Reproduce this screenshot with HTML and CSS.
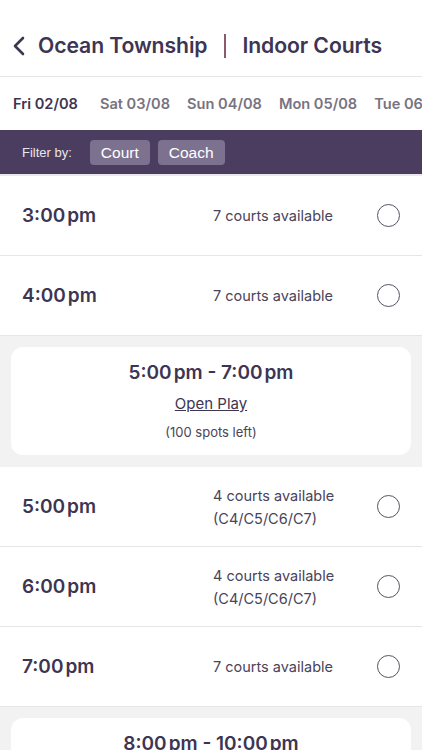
FILE: index.html
```html
<!DOCTYPE html>
<html lang="en">
<head>
    <meta charset="UTF-8">
    <meta name="viewport" content="width=device-width, initial-scale=1.0">
    <title>Indoor Courts</title>
    <link rel="stylesheet" href="styles.css">
</head>
<body>
    <div class="header">
        <svg class="back" width="14" height="22" viewBox="0 0 14 22">
            <path d="M11 3 L3 11 L11 19" fill="none" stroke="#3d3552" stroke-width="2.6" stroke-linecap="round" stroke-linejoin="round"/>
        </svg>
        <span class="title">Ocean Township</span>
        <span class="sep"></span>
        <span class="title">Indoor Courts</span>
    </div>

    <div class="dates">
        <span class="date active">Fri 02/08</span>
        <span class="date">Sat 03/08</span>
        <span class="date">Sun 04/08</span>
        <span class="date">Mon 05/08</span>
        <span class="date">Tue 06/08</span>
    </div>

    <div class="filter">
        <span class="filter-label">Filter by:</span>
        <span class="chip">Court</span>
        <span class="chip">Coach</span>
    </div>

    <div class="slots">
        <div class="slot">
            <div class="time">3:00<span class="ampm">pm</span></div>
            <div class="avail">7 courts available</div>
            <div class="radio"></div>
        </div>
        <div class="slot">
            <div class="time">4:00<span class="ampm">pm</span></div>
            <div class="avail">7 courts available</div>
            <div class="radio"></div>
        </div>
        <div class="event-wrap">
            <div class="event">
                <div class="event-time">5:00<span class="ampm">pm</span> - 7:00<span class="ampm">pm</span></div>
                <a class="event-name" href="#">Open Play</a>
                <div class="event-spots">(100 spots left)</div>
            </div>
        </div>
        <div class="slot">
            <div class="time">5:00<span class="ampm">pm</span></div>
            <div class="avail">4 courts available<br>(C4/C5/C6/C7)</div>
            <div class="radio"></div>
        </div>
        <div class="slot">
            <div class="time">6:00<span class="ampm">pm</span></div>
            <div class="avail">4 courts available<br>(C4/C5/C6/C7)</div>
            <div class="radio"></div>
        </div>
        <div class="slot">
            <div class="time">7:00<span class="ampm">pm</span></div>
            <div class="avail">7 courts available</div>
            <div class="radio"></div>
        </div>
        <div class="event-wrap">
            <div class="event">
                <div class="event-time">8:00<span class="ampm">pm</span> - 10:00<span class="ampm">pm</span></div>
                <a class="event-name" href="#">Open Play</a>
                <div class="event-spots">(100 spots left)</div>
            </div>
        </div>
    </div>
</body>
</html>
```

FILE: styles.css
```css
/* Court booking screen */
body {
    margin: 0;
    font-family: Inter, "Noto Sans", sans-serif;
    color: #3d3552;
    background: #fff;
    overflow: hidden;
}

.header {
    height: 77px;
    display: flex;
    align-items: center;
    padding-left: 12px;
    padding-top: 13px;
    border-bottom: 1px solid #e6e6e9;
    box-sizing: border-box;
}
.back {
    margin-right: 12px;
    margin-top: 2px;
}
.title {
    font-size: 21.2px;
    font-weight: 600;
    color: #3d3552;
    letter-spacing: -0.1px;
}
.sep {
    width: 2px;
    height: 24px;
    background: #8c5a6e;
    margin: 2px 16px 0 17px;
}

.dates {
    height: 53px;
    display: flex;
    align-items: center;
    gap: 17px;
    padding-left: 13px;
    white-space: nowrap;
    overflow: hidden;
}
.date {
    font-size: 14.6px;
    font-weight: 600;
    color: #77737f;
}
.date.active {
    color: #3d3552;
    margin-right: 5px;
}

.filter {
    height: 44px;
    background: #4a3d5f;
    display: flex;
    align-items: center;
    padding-left: 22px;
    border-bottom: 2px solid #e9e8ec;
    font-family: "Liberation Sans", Arial, sans-serif;
}
.filter-label {
    color: #e8e5ee;
    font-size: 13px;
    margin-right: 18px;
}
.chip {
    background: #7c7290;
    color: #fff;
    font-size: 15.5px;
    padding: 0 11px;
    height: 25px;
    line-height: 25px;
    border-radius: 4px;
    margin-right: 8px;
}

.slot {
    height: 80px;
    box-sizing: border-box;
    display: flex;
    align-items: center;
    padding: 0 22px 0 22px;
    border-bottom: 1px solid #e6e6e9;
}
.time {
    font-size: 19px;
    font-weight: 600;
    color: #3d3552;
    width: 191px;
}
.ampm {
    margin-left: 2px;
}
.avail {
    flex: 1;
    font-size: 14.5px;
    line-height: 23px;
    color: #4a4458;
}
.radio {
    width: 21px;
    height: 21px;
    border: 1.3px solid #555260;
    border-radius: 50%;
}

.event-wrap {
    background: #f2f2f3;
    padding: 11px 11px 12px;
}
.event {
    background: #fff;
    border-radius: 12px;
    height: 108px;
    display: flex;
    flex-direction: column;
    align-items: center;
    padding-top: 14px;
    box-sizing: border-box;
}
.event-time {
    font-size: 19px;
    font-weight: 600;
    color: #3d3552;
}
.event-name {
    margin-top: 10px;
    font-size: 15px;
    color: #3d3552;
    text-decoration: underline;
}
.event-spots {
    margin-top: 11px;
    font-size: 13px;
    color: #4a4458;
}
```
